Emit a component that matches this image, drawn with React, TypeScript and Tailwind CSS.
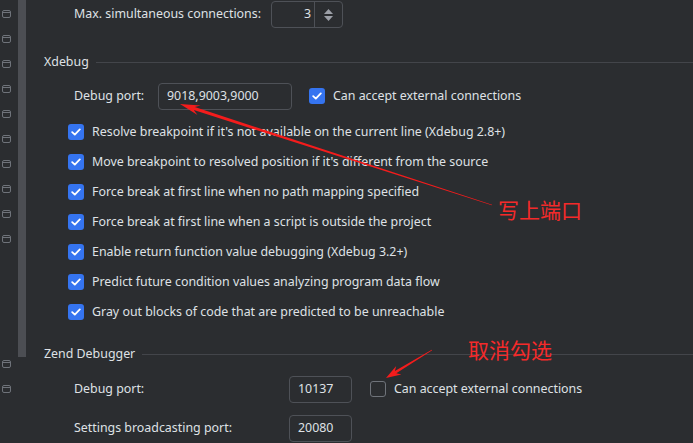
import React from "react";

const font = { fontFamily: '"Noto Sans", "Open Sans", sans-serif' };

function GutterIcon() {
  return (
    <svg width="9" height="8" viewBox="0 0 9 8" className="block">
      <rect x="0.5" y="0.5" width="8" height="7" rx="1.5" fill="none" stroke="#6f737a" strokeWidth="1" />
      <line x1="0.5" y1="2.5" x2="8.5" y2="2.5" stroke="#6f737a" strokeWidth="1" />
    </svg>
  );
}

function Checkbox({ checked = true }: { checked?: boolean }) {
  if (!checked) {
    return <span className="block h-4 w-4 shrink-0 rounded-[3px] border border-[#6f737a]" />;
  }
  return (
    <span className="flex h-4 w-4 shrink-0 items-center justify-center rounded-[3px] bg-[#3574f0]">
      <svg width="10" height="8" viewBox="0 0 10 8">
        <path d="M1.2 4.2 L3.8 6.6 L8.8 1.4" fill="none" stroke="#fff" strokeWidth="1.8" strokeLinecap="round" strokeLinejoin="round" />
      </svg>
    </span>
  );
}

function SectionHeader({ title }: { title: string }) {
  return (
    <div className="flex h-5 items-center pl-[18px]">
      <span className="text-[12.4px] text-[#dfe1e5]">{title}</span>
      <span className="ml-[7px] h-px flex-1 bg-[#43454a]" />
    </div>
  );
}

function CheckRow({ label }: { label: string }) {
  return (
    <div className="flex h-[30px] items-center gap-2 pl-[42px]">
      <Checkbox />
      <span className="text-[12.4px] text-[#dfe1e5]">{label}</span>
    </div>
  );
}

function arrow(tx: number, ty: number, ex: number, ey: number, headLen: number, headHalf: number, shaft: number) {
  const dx = ex - tx;
  const dy = ey - ty;
  const len = Math.hypot(dx, dy);
  const ux = dx / len;
  const uy = dy / len;
  const nx = -uy;
  const ny = ux;
  const bx = tx + ux * headLen;
  const by = ty + uy * headLen;
  const cx = tx + ux * headLen * 0.75;
  const cy = ty + uy * headLen * 0.75;
  const p = (x: number, y: number) => `${x.toFixed(1)},${y.toFixed(1)}`;
  return [
    p(tx, ty),
    p(bx + nx * headHalf, by + ny * headHalf),
    p(cx + nx * shaft, cy + ny * shaft),
    p(ex + nx * 0.3, ey + ny * 0.3),
    p(ex - nx * 0.3, ey - ny * 0.3),
    p(cx - nx * shaft, cy - ny * shaft),
    p(bx - nx * headHalf, by - ny * headHalf),
  ].join(" ");
}

const checks = [
  "Resolve breakpoint if it's not available on the current line (Xdebug 2.8+)",
  "Move breakpoint to resolved position if it's different from the source",
  "Force break at first line when no path mapping specified",
  "Force break at first line when a script is outside the project",
  "Enable return function value debugging (Xdebug 3.2+)",
  "Predict future condition values analyzing program data flow",
  "Gray out blocks of code that are predicted to be unreachable",
];

export default function App() {
  const gutterTop = [14, 39, 64, 89, 114, 139, 164, 189, 214, 239, 364, 389];
  return (
    <div className="relative flex h-[443px] w-[693px] overflow-hidden bg-[#2b2d30]" style={font}>
      {/* gutter */}
      <div className="relative w-[18px] shrink-0">
        {gutterTop.map((y) => (
          <div key={y} className="absolute left-[2px]" style={{ top: y - 4 }}>
            <GutterIcon />
          </div>
        ))}
      </div>
      <div className="h-[357px] w-2 shrink-0 bg-[#4c4e53]" />

      {/* content */}
      <div className="flex flex-1 flex-col pt-px">
        <div className="flex h-[27px] items-center pl-[48px]">
          <span className="w-[197px] text-[12.4px] text-[#dfe1e5]">Max. simultaneous connections:</span>
          <div className="flex h-[27px] w-[72px] rounded-[4px] border border-[#4e5157]">
            <div className="flex flex-1 items-center justify-end pr-[3px] text-[12.4px] text-[#dfe1e5]">3</div>
            <div className="flex w-[28px] flex-col items-center justify-center gap-[2px] border-l border-[#4e5157]">
              <svg width="9" height="5" viewBox="0 0 9 5"><path d="M0 5 L4.5 0 L9 5 Z" fill="#9da0a8" /></svg>
              <svg width="9" height="5" viewBox="0 0 9 5"><path d="M0 0 L4.5 5 L9 0 Z" fill="#9da0a8" /></svg>
            </div>
          </div>
        </div>

        <div className="mt-[24px]">
          <SectionHeader title="Xdebug" />
        </div>

        <div className="mt-[11px] flex h-[27px] items-center pl-[48px]">
          <span className="w-[84px] text-[12.4px] text-[#dfe1e5]">Debug port:</span>
          <div className="flex h-[27px] w-[134px] items-center rounded-[4px] border border-[#4e5157] pl-[8px] text-[12.4px] text-[#dfe1e5]">
            9018,9003,9000
          </div>
          <div className="ml-[17px] flex items-center gap-2">
            <Checkbox />
            <span className="text-[12.4px] text-[#dfe1e5]">Can accept external connections</span>
          </div>
        </div>

        <div className="mt-[7px] flex flex-col">
          {checks.map((c) => (
            <CheckRow key={c} label={c} />
          ))}
        </div>

        <div className="mt-[17px]">
          <SectionHeader title="Zend Debugger" />
        </div>

        <div className="mt-[12px] flex h-[27px] items-center pl-[48px]">
          <span className="w-[215px] text-[12.4px] text-[#dfe1e5]">Debug port:</span>
          <div className="flex h-[27px] w-[63px] items-center rounded-[4px] border border-[#4e5157] pl-[8px] text-[12.4px] text-[#dfe1e5]">
            10137
          </div>
          <div className="ml-[18px] flex items-center gap-2">
            <Checkbox checked={false} />
            <span className="text-[12.4px] text-[#dfe1e5]">Can accept external connections</span>
          </div>
        </div>

        <div className="mt-[12px] flex h-[27px] items-center pl-[48px]">
          <span className="w-[215px] text-[12.4px] text-[#dfe1e5]">Settings broadcasting port:</span>
          <div className="flex h-[27px] w-[63px] items-center rounded-[4px] border border-[#4e5157] pl-[8px] text-[12.4px] text-[#dfe1e5]">
            20080
          </div>
        </div>
      </div>

      {/* annotations */}
      <svg className="pointer-events-none absolute inset-0" width="693" height="443">
        <polygon points={arrow(180, 104, 492, 205, 20, 5, 1.6)} fill="#f41c1c" />
        <polygon points={arrow(386, 378, 432, 350, 15, 5, 1.4)} fill="#f41c1c" />
      </svg>
      <span
        className="absolute left-[498px] top-[194px] text-[21px] leading-[30px] text-[#f52a2a]"
        style={{ fontFamily: '"Noto Sans CJK SC", sans-serif' }}
      >
        写上端口
      </span>
      <span
        className="absolute left-[468px] top-[334px] text-[21px] leading-[30px] text-[#f52a2a]"
        style={{ fontFamily: '"Noto Sans CJK SC", sans-serif' }}
      >
        取消勾选
      </span>
    </div>
  );
}
